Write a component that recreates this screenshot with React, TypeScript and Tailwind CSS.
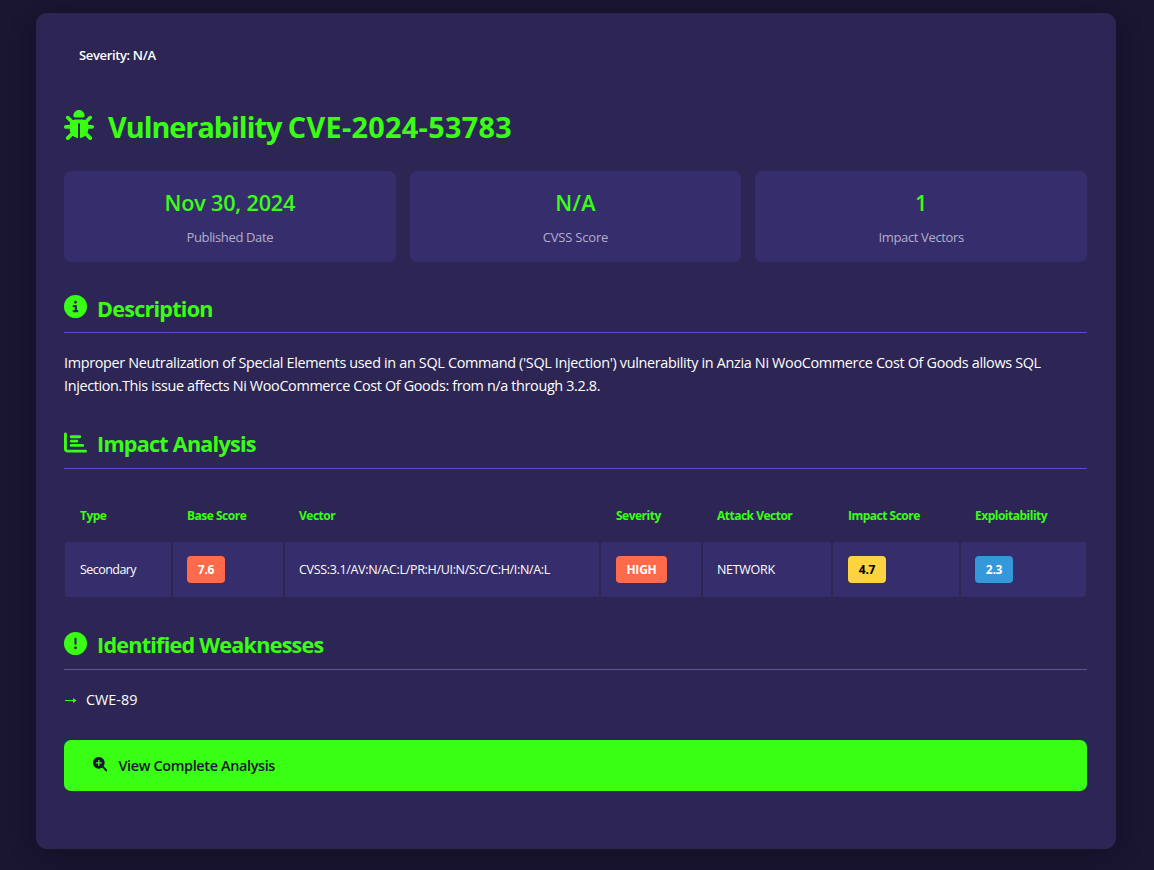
import type { ReactNode } from "react";
import {
    FaBug,
    FaCircleInfo,
    FaChartBar,
    FaCircleExclamation,
    FaMagnifyingGlassPlus,
} from "react-icons/fa6";

type Stat = {
    value: string,
    label: string,
    valueClass: string,
    labelClass: string
};

const stats: Stat[] = [
    { value: "Nov 30, 2024", label: "Published Date", valueClass: "tracking-[-0.17px]", labelClass: "tracking-[-0.36px]" },
    { value: "N/A", label: "CVSS Score", valueClass: "tracking-[0.3px]", labelClass: "tracking-[-0.2px]" },
    { value: "1", label: "Impact Vectors", valueClass: "", labelClass: "tracking-[-0.36px]" },
];

const Badge = ({ color, children }: { color: string, children: ReactNode }) => (
    <span className={`inline-flex h-[27px] items-center justify-center rounded-[4px] text-[12px] font-bold tracking-[-0.2px] ${color}`}>
        {children}
    </span>
);

const columns = [
    { title: "Type", width: "w-[106px] pl-[15px]" },
    { title: "Base Score", width: "w-[110px] pl-[14px]" },
    { title: "Vector", width: "w-[314px] pl-[14px]" },
    { title: "Severity", width: "w-[100px] pl-[15px]" },
    { title: "Attack Vector", width: "w-[128px] pl-[14px]" },
    { title: "Impact Score", width: "w-[126px] pl-[15px]" },
    { title: "Exploitability", width: "w-[125px] pl-[14px]" },
];

const cells: ReactNode[] = [
    <span className="mt-px tracking-[-0.55px]">Secondary</span>,
    <Badge color="w-[38px] bg-[#ff6b4a] text-white">7.6</Badge>,
    <span className="mt-px tracking-[-0.33px]">CVSS:3.1/AV:N/AC:L/PR:H/UI:N/S:C/C:H/I:N/A:L</span>,
    <Badge color="w-[51px] bg-[#ff6b4a] text-white">HIGH</Badge>,
    <span className="mt-px tracking-[-0.3px]">NETWORK</span>,
    <Badge color="w-[38px] bg-[#ffd23f] text-black">4.7</Badge>,
    <Badge color="w-[38px] bg-[#3498db] text-white">2.3</Badge>,
];

const SectionTitle = ({ icon, children }: { icon: ReactNode, children: ReactNode }) => (
    <h2 className="flex h-[47px] items-start border-b border-[#6344d4] text-[21.6px] leading-[46px] font-bold tracking-[-0.77px] text-[#39ff14]">
        <span className="mt-[9px] mr-[10px] text-[23px]">{icon}</span>
        {children}
    </h2>
);

export default function App() {
    return (
        <div className="h-[870px] overflow-hidden bg-[#1a1530] pt-[13px] pl-9 font-['Open_Sans','Noto_Sans',sans-serif] text-white">
            <div className="h-[836px] w-[1080px] rounded-[11px] bg-[#2d2654] pr-[29px] pl-7 pt-[30px] shadow-[0_7px_29px_rgba(0,0,0,0.2)]">
                <div className="h-6 pl-[15px] text-[13px] leading-6 font-semibold tracking-[-0.35px]">Severity: N/A</div>

                <h1 className="mt-[37px] flex h-12 items-start text-[28.8px] leading-[46px] font-bold text-[#39ff14]">
                    <FaBug className="mt-[6px] mr-[14px] size-[30px]" />
                    <span className="whitespace-pre">
                        <span className="tracking-[-1px]">Vulnerability </span>
                        <span className="tracking-[0.31px]">CVE-2024-53783</span>
                    </span>
                </h1>

                <div className="mt-[19px] grid grid-cols-3 gap-[14px]">
                    {stats.map((stat) => (
                        <div key={stat.label} className="h-[91px] rounded-[7px] bg-[#362d6d] pt-4 text-center">
                            <div className="text-[21.6px] leading-8 font-semibold text-[#39ff14]">
                                <span className={stat.valueClass}>{stat.value}</span>
                            </div>
                            <div className="mt-2 text-[13px] leading-5 text-[#b3b0cc]">
                                <span className={stat.labelClass}>{stat.label}</span>
                            </div>
                        </div>
                    ))}
                </div>

                <div className="mt-6">
                    <SectionTitle icon={<FaCircleInfo />}>
                        <span>Description</span>
                    </SectionTitle>
                    <p className="mt-[18px] text-[14.4px] leading-[23px] whitespace-nowrap">
                        <span className="tracking-[-0.322px]">Improper Neutralization of Special Elements used in an SQL Command ('SQL Injection') vulnerability in Anzia Ni WooCommerce Cost Of Goods allows SQL</span>
                        <br />
                        <span className="tracking-[-0.35px]">Injection.This issue affects Ni WooCommerce Cost Of Goods: from n/a through 3.2.8.</span>
                    </p>
                </div>

                <div className="mt-[25px]">
                    <SectionTitle icon={<FaChartBar />}>
                        <span className="-mt-px">Impact Analysis</span>
                    </SectionTitle>
                    <div className="mt-5 flex flex-col gap-[2px] px-px">
                        <div className="flex gap-[2px]">
                            {columns.map((column) => (
                                <div key={column.title} className={`flex h-[51px] shrink-0 items-center pt-[3px] text-[12px] font-bold tracking-[-0.5px] text-[#39ff14] ${column.width}`}>
                                    {column.title}
                                </div>
                            ))}
                        </div>
                        <div className="flex gap-[2px] overflow-hidden rounded-b-[4px]">
                            {cells.map((cell, index) => (
                                <div key={index} className={`flex h-[55px] shrink-0 items-center bg-[#362d6d] text-[12.5px] ${columns[index].width}`}>
                                    {cell}
                                </div>
                            ))}
                        </div>
                    </div>
                </div>

                <div className="mt-[26px]">
                    <SectionTitle icon={<FaCircleExclamation />}>
                        <span className="-mt-px">Identified Weaknesses</span>
                    </SectionTitle>
                    <ul className="mt-[18px]">
                        <li className="flex h-6 items-center text-[14.4px]">
                            <svg className="mr-[9px] ml-px text-[#39ff14]" width="12" height="7" viewBox="0 0 12 7" fill="currentColor">
                                <path d="M0 3H8V1L11.5 3.5L8 6V4H0Z" />
                            </svg>
                            <span>CWE-89</span>
                        </li>
                    </ul>
                </div>

                <a href="#" className="mt-7 flex h-[51px] items-center rounded-[7px] bg-[#39ff14] pl-[29px] text-[14.4px] font-semibold tracking-[-0.34px] text-[#1a1530]">
                    <FaMagnifyingGlassPlus className="mr-[11px] mb-[2px] size-[14.4px]" />
                    <span>View Complete Analysis</span>
                </a>
            </div>
        </div>
    );
}
